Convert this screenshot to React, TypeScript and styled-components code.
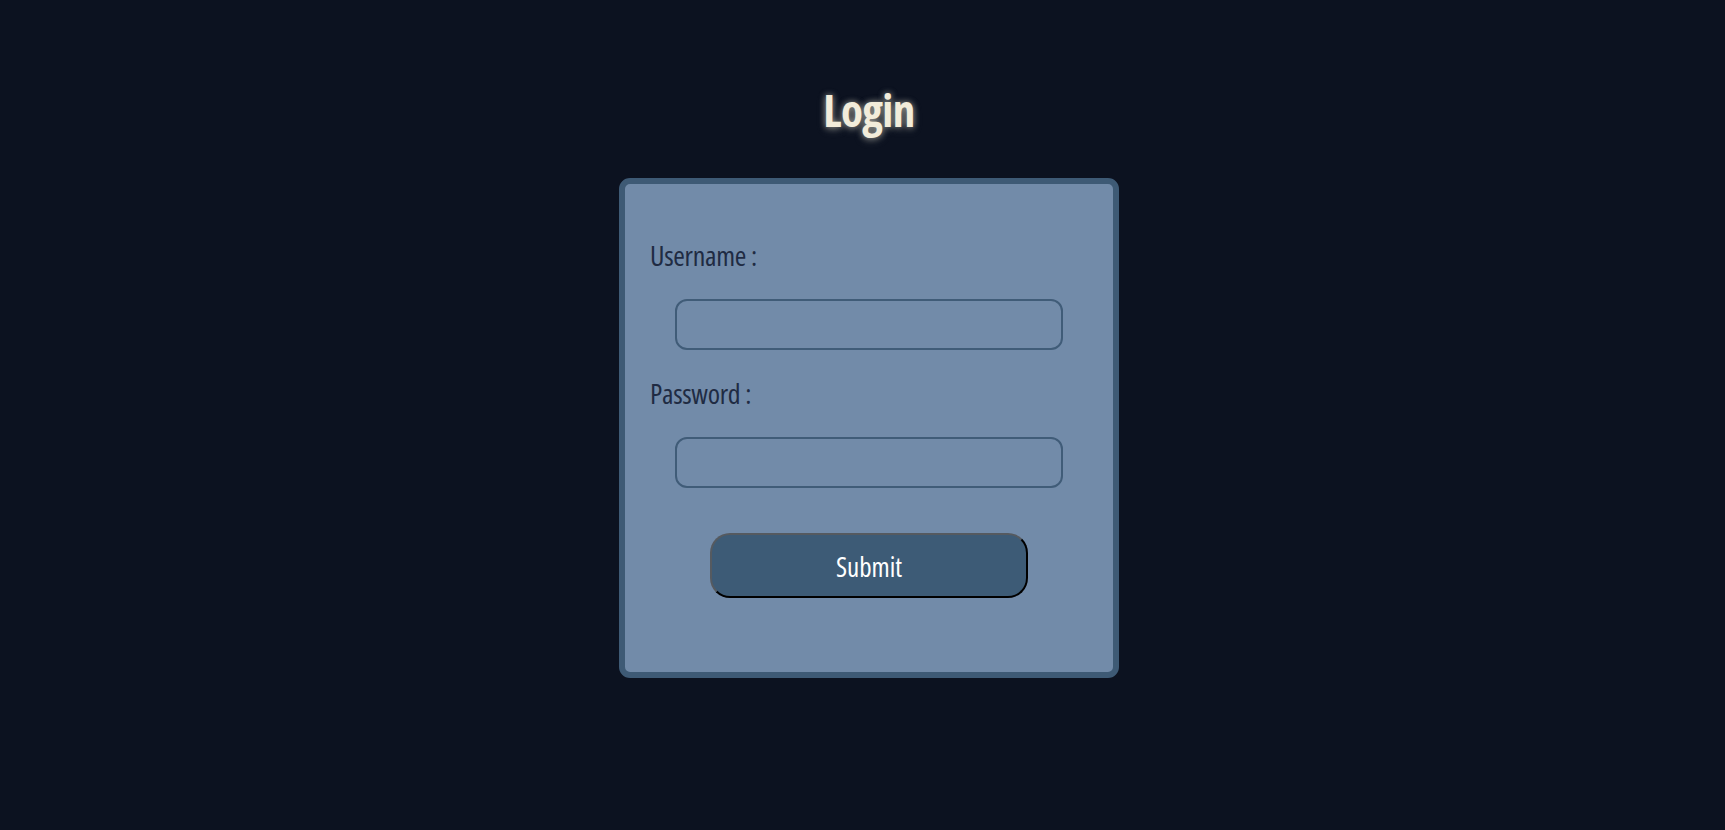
import React from "react";
import styled, { createGlobalStyle } from "styled-components";

const Global = createGlobalStyle`
  html, body {
    margin: 0;
    padding: 0;
    background: #0c1220;
  }
  body {
    font-family: "Open Sans", "DejaVu Sans", sans-serif;
    font-stretch: 75%;
    min-height: 830px;
  }
`;

const Page = styled.main`
  display: flex;
  flex-direction: column;
  align-items: center;
  padding: 87px 0 0 13px;
`;

const Title = styled.h1`
  margin: 0 0 45px;
  font-size: 45px;
  font-weight: 700;
  font-stretch: 75%;
  line-height: 46px;
  letter-spacing: -0.6px;
  color: #f2ecda;
  text-shadow: 0 0 6px rgba(230, 225, 205, 0.55), 0 2px 8px rgba(200, 200, 190, 0.35);
`;

const Card = styled.form`
  box-sizing: border-box;
  width: 500px;
  height: 500px;
  border: 6px solid #3e5a75;
  border-radius: 11px;
  background: #728ba9;
  padding: 57px 0 0;
  display: flex;
  flex-direction: column;
`;

const Label = styled.label<{ $gap: number }>`
  margin: ${(p) => p.$gap}px 0 0 25px;
  font-size: 28px;
  font-stretch: 75%;
  line-height: 29px;
  letter-spacing: -0.3px;
  color: #1f2b43;
`;

const Input = styled.input`
  box-sizing: border-box;
  margin: 29px 0 0 50px;
  width: 388px;
  height: 51px;
  border: 2px solid #405c78;
  border-radius: 12px;
  background: #728ba9;
  outline: none;
  font-size: 20px;
  padding: 0 12px;
`;

const Submit = styled.button`
  box-sizing: border-box;
  align-self: center;
  margin-top: 45px;
  width: 318px;
  height: 65px;
  padding-top: 2px;
  border: 2px solid #555a60;
  border-right-color: #000;
  border-bottom-color: #000;
  border-radius: 20px;
  background: #3d5b76;
  color: #ffffff;
  font-family: inherit;
  font-stretch: 75%;
  font-size: 27px;
  cursor: pointer;
`;

export default function App() {
  return (
    <>
      <Global />
      <Page>
        <Title>Login</Title>
        <Card onSubmit={(e) => e.preventDefault()}>
          <Label $gap={0} htmlFor="username">Username :</Label>
          <Input id="username" type="text" />
          <Label $gap={29} htmlFor="password">Password :</Label>
          <Input id="password" type="password" />
          <Submit type="submit">Submit</Submit>
        </Card>
      </Page>
    </>
  );
}
